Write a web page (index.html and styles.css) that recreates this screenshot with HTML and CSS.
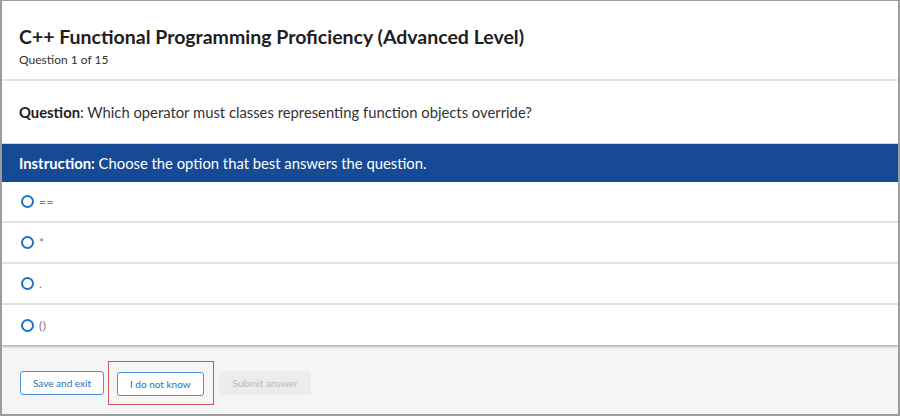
FILE: index.html
```html
<!DOCTYPE html>
<html>
<head>
<meta charset="utf-8">
<link rel="stylesheet" href="styles.css">
</head>
<body>
<div class="frame">
  <header class="head">
    <h1 class="title">C++ Functional Programming Proficiency (Advanced Level)</h1>
    <div class="sub">Question 1 of 15</div>
  </header>
  <section class="question"><b>Question</b>: Which operator must classes representing function objects override?</section>
  <div class="instruction"><b>Instruction:</b> Choose the option that best answers the question.</div>
  <ul class="options">
    <li class="opt"><span class="radio"></span><span class="label">==</span></li>
    <li class="opt"><span class="radio"></span><span class="label">*</span></li>
    <li class="opt"><span class="radio"></span><span class="label">.</span></li>
    <li class="opt last"><span class="radio"></span><span class="label">()</span></li>
  </ul>
  <footer class="foot">
    <button class="btn">Save and exit</button>
    <div class="highlight"><button class="btn">I do not know</button></div>
    <button class="btn disabled">Submit answer</button>
  </footer>
</div>
</body>
</html>
```

FILE: styles.css
```css
html, body {
  margin: 0;
  padding: 0;
  background: #fff;
}
body {
  font-family: Lato, "Liberation Sans", sans-serif;
  color: #222;
}
.frame {
  width: 900px;
  height: 416px;
  box-sizing: border-box;
  border: 1px solid #9c9c9c;
  border-left-width: 2px;
  border-right-width: 2px;
  border-bottom-width: 2px;
  display: flex;
  flex-direction: column;
  overflow: hidden;
}
.head {
  height: 80px;
  flex: none;
  box-sizing: border-box;
  padding: 24px 17px 0;
  border-bottom: 2px solid #e4e4e4;
}
.title {
  margin: 0;
  font-size: 19.5px;
  line-height: 24px;
  font-weight: 700;
  color: #1e1e1e;
}
.sub {
  margin-top: 4px;
  font-size: 12px;
  line-height: 14px;
  color: #333;
}
.question {
  height: 62px;
  flex: none;
  box-sizing: border-box;
  display: flex;
  align-items: center;
  padding: 0 17px;
  font-size: 14.8px;
  color: #333;
}
.question b {
  color: #1e1e1e;
}
.instruction {
  height: 39px;
  flex: none;
  box-sizing: border-box;
  background: #174a94;
  color: #fff;
  display: flex;
  align-items: center;
  padding: 0 17px;
  font-size: 14.8px;
  white-space: pre;
  border-top: 1px solid #c9d3e6;
}
.options {
  list-style: none;
  margin: 0;
  padding: 0;
  flex: none;
}
.opt {
  height: 41px;
  box-sizing: border-box;
  border-bottom: 2px solid #e3e3e3;
  display: flex;
  align-items: center;
  padding-left: 19px;
}
.opt.last {
  border-bottom: 1px solid #bcbcbc;
  box-shadow: 0 1px 2px rgba(0,0,0,0.25);
  position: relative;
}
.radio {
  width: 9px;
  height: 9px;
  border: 2px solid #1c72c9;
  border-radius: 50%;
  margin-right: 5px;
}
.label {
  font-family: Lato, "Liberation Sans", sans-serif;
  font-size: 12px;
  letter-spacing: 0.5px;
  color: #777;
}
.foot {
  flex: 1;
  background: #f5f5f5;
  display: flex;
  align-items: center;
  padding: 5px 18px 0;
}
.btn {
  font-family: Lato, "Liberation Sans", sans-serif;
  font-size: 10px;
  height: 24px;
  padding: 0 12px;
  background: #fff;
  border: 1px solid #4a92dc;
  border-radius: 3px;
  color: #2a6fb8;
}
.btn:first-child {
  margin-right: 4px;
}
.highlight {
  display: flex;
  border: 1px solid #d1555a;
  padding: 10px 5px 8px 8px;
  margin-right: 5px;
}
.btn.disabled {
  background: #ececec;
  border-color: #ececec;
  color: #b9b9b9;
  padding: 0 13px;
}
```
